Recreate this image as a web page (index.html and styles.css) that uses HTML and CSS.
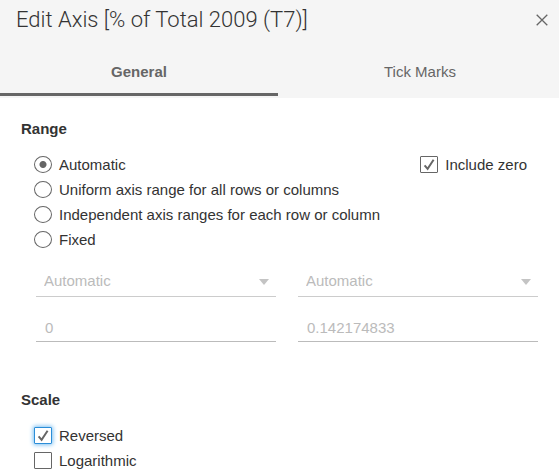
FILE: index.html
```html
<!DOCTYPE html>
<html lang="en">
<head>
<meta charset="utf-8">
<title>Edit Axis</title>
<link rel="stylesheet" href="styles.css">
</head>
<body>
<main class="dialog">
  <header class="header">
    <div class="title-bar">
      <h1 class="title">Edit Axis [% of Total 2009 (T7)]</h1>
      <button class="close" type="button" aria-label="Close">
        <svg width="12" height="12" viewBox="0 0 12 12" aria-hidden="true"><path d="M.7.7l10.6 10.6M11.3.7L.7 11.3"/></svg>
      </button>
    </div>
    <div class="tabs" role="tablist">
      <button class="tab tab-active" type="button" role="tab" aria-selected="true">General</button>
      <button class="tab" type="button" role="tab" aria-selected="false">Tick Marks</button>
    </div>
  </header>
  <form class="body">
    <section class="section">
      <h2 class="heading">Range</h2>
      <div class="options-row">
        <div class="options">
          <label class="option"><input class="radio" type="radio" name="range" checked>Automatic</label>
          <label class="option"><input class="radio" type="radio" name="range">Uniform axis range for all rows or columns</label>
          <label class="option"><input class="radio" type="radio" name="range">Independent axis ranges for each row or column</label>
          <label class="option"><input class="radio" type="radio" name="range">Fixed</label>
        </div>
        <label class="option include-zero">
          <span class="check"><input class="box" type="checkbox" checked><svg class="tick" viewBox="0 0 18 17" aria-hidden="true"><path d="M4.6 9.4L7.6 12.8L13.6 3.8"/></svg></span>Include zero
        </label>
      </div>
      <div class="fields">
        <div class="select-wrap">
          <select class="field" aria-label="Range start type" disabled><option>Automatic</option></select>
          <svg class="arrow" viewBox="0 0 10 6" aria-hidden="true"><path d="M0 0h10L5 6z"/></svg>
        </div>
        <div class="select-wrap">
          <select class="field" aria-label="Range end type" disabled><option>Automatic</option></select>
          <svg class="arrow" viewBox="0 0 10 6" aria-hidden="true"><path d="M0 0h10L5 6z"/></svg>
        </div>
        <input class="field field-text" type="text" aria-label="Range start" value="0" disabled>
        <input class="field field-text" type="text" aria-label="Range end" value="0.142174833" disabled>
      </div>
    </section>
    <section class="section">
      <h2 class="heading">Scale</h2>
      <div class="options">
        <label class="option">
          <span class="check"><input class="box box-focus" type="checkbox" checked><svg class="tick" viewBox="0 0 18 17" aria-hidden="true"><path d="M4.6 9.4L7.6 12.8L13.6 3.8"/></svg></span>Reversed
        </label>
        <label class="option">
          <span class="check"><input class="box" type="checkbox"></span>Logarithmic
        </label>
      </div>
    </section>
  </form>
</main>
</body>
</html>
```
FILE: styles.css
```css
* {
  box-sizing: border-box;
}

body {
  margin: 0;
  background: #fff;
  color: #333;
  font: 15px/20px "Liberation Sans", Arial, sans-serif;
}

.header {
  background: #f5f5f5;
  padding-bottom: 2px;
}

.title-bar {
  display: flex;
  align-items: center;
  justify-content: space-between;
  height: 40px;
  padding: 0 11px 0 16px;
}

.title {
  margin: 0;
  color: #333;
  font: 300 22px/28px Roboto, "Open Sans", sans-serif;
}

.close {
  display: flex;
  padding: 0;
  border: 0;
  background: none;
}

.close path {
  fill: none;
  stroke: #666;
  stroke-width: 1.3;
}

.tabs {
  display: grid;
  grid-template-columns: 1fr 1fr;
  gap: 3px;
  padding-top: 8px;
}

.tab {
  height: 48px;
  padding: 2px 0 0;
  border: 0;
  border-bottom: 3px solid transparent;
  background: none;
  color: #666;
  font: inherit;
}

.tab-active {
  border-color: #666;
  font-weight: bold;
}

.body {
  padding: 21px 21px 0;
}

.section + .section {
  margin-top: 48px;
}

.heading {
  margin: 0 0 13px;
  font-size: 15px;
  line-height: 20px;
}

.options-row {
  display: flex;
  justify-content: space-between;
  align-items: flex-start;
}

.options {
  padding-left: 13px;
}

.option {
  display: flex;
  align-items: center;
  gap: 7px;
  height: 25px;
}

.include-zero {
  padding-right: 11px;
}

.check {
  position: relative;
  display: flex;
}

.radio,
.box {
  appearance: none;
  width: 18px;
  height: 17px;
  margin: 0;
  border: 1px solid #666;
  background: #fff;
}

.radio {
  border-radius: 50%;
}

.radio:checked {
  background: radial-gradient(circle, #666 3px, #fff 4px);
}

.box {
  border-radius: 1px;
}

.box-focus {
  border-color: #2a8dd8;
  box-shadow: 0 0 4px 1px #7cc0f2;
}

.tick {
  position: absolute;
  inset: 0;
  fill: none;
  stroke: #666;
  stroke-width: 2;
}

.fields {
  display: grid;
  grid-template-columns: 1fr 1fr;
  gap: 13px 22px;
  padding: 13px 0 0 15px;
}

.select-wrap {
  position: relative;
}

.field {
  appearance: none;
  display: block;
  width: 100%;
  height: 32px;
  padding: 0 8px;
  border: 0;
  border-bottom: 1px solid #ccc;
  border-radius: 0;
  background: #fff;
  color: #bbb;
  font: inherit;
  opacity: 1;
}

.field-text {
  padding: 3px 9px 0;
  border-color: #bbb;
}

.arrow {
  position: absolute;
  top: 14px;
  right: 7px;
  width: 10px;
  height: 6px;
  fill: #c4c4c4;
}
```
